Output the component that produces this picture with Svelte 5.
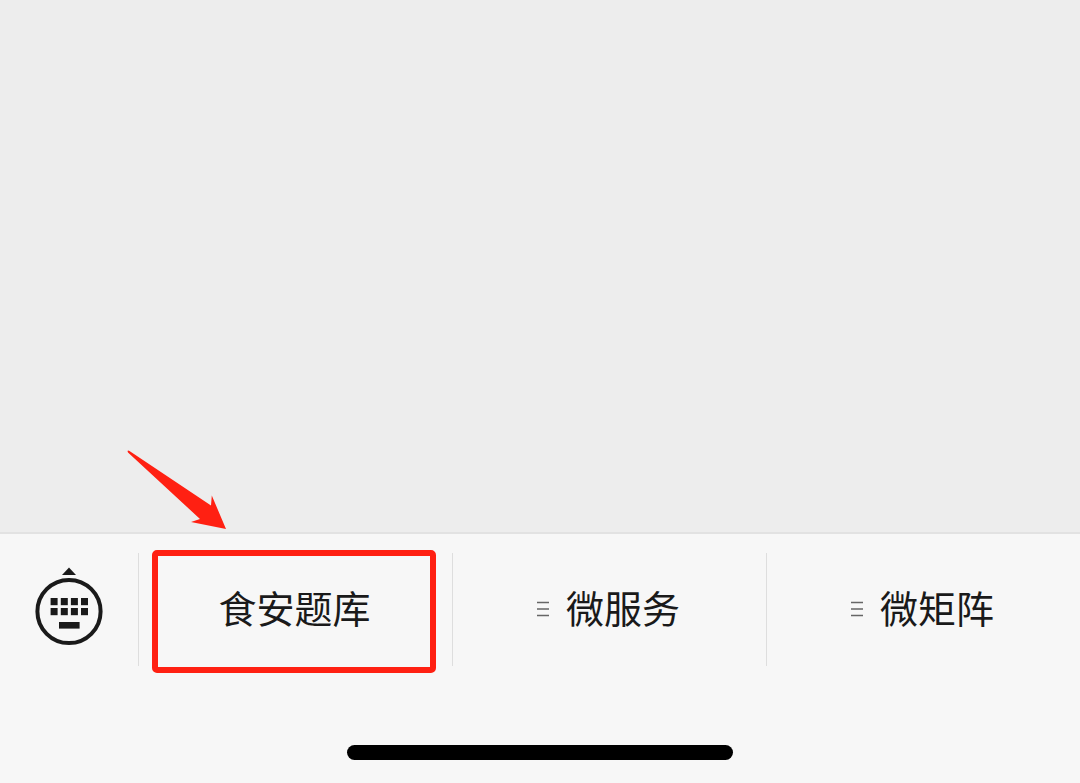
<script>
  const menus = [
    { label: '食安题库', submenu: false, marked: true },
    { label: '微服务', submenu: true, marked: false },
    { label: '微矩阵', submenu: true, marked: false },
  ];
</script>

<div class="screen">
  <main class="chat"></main>

  <footer class="dock">
    <nav class="bar">
      <button class="toggle" type="button" aria-label="键盘">
        <svg width="70" height="80" viewBox="0 0 70 80" aria-hidden="true">
          <path d="M35 1.6 L42 9 H28 Z" fill="#1a1a1a" />
          <circle cx="35" cy="45.5" r="31.6" fill="none" stroke="#1a1a1a" stroke-width="4" />
          <g fill="#1a1a1a">
            {#each [32, 42] as y}
              {#each [16.6, 26.8, 36.9, 47] as x}
                <rect {x} {y} width="7" height="7.2" />
              {/each}
            {/each}
            <rect x="25" y="56" width="20.6" height="6.6" />
          </g>
        </svg>
      </button>

      {#each menus as menu}
        <div class="cell">
          <button class="item" type="button">
            {#if menu.submenu}
              <svg class="lines" width="12" height="16" viewBox="0 0 12 16" aria-hidden="true">
                <path d="M0 1.5H12M0 8H12M0 14.5H12" stroke="#666" stroke-width="1.4" />
              </svg>
            {/if}
            <span>{menu.label}</span>
          </button>
          {#if menu.marked}
            <div class="mark"></div>
            <svg class="arrow" width="101" height="80" viewBox="0 0 101 80" aria-hidden="true">
              <path d="M1.5 1 Q2 0 3.5 1 L85 55.5 L85.8 45.5 L100 79 L65 72 L74 69 L2 2.5 Z" fill="#ff2012" />
            </svg>
          {/if}
        </div>
      {/each}
    </nav>
    <div class="home"></div>
  </footer>
</div>

<style>
  :global(body) {
    margin: 0;
    background: #f7f7f7;
  }

  .screen {
    min-height: 100vh;
    display: flex;
    flex-direction: column;
    font-family: 'Noto Sans CJK SC', sans-serif;
    color: #1a1a1a;
  }

  .chat {
    flex: 1;
    background: #ededed;
  }

  .dock {
    display: flex;
    flex-direction: column;
    align-items: center;
    gap: 79px;
    padding: 19px 0 23px;
    border-top: 2px solid #e2e2e2;
    background: #f7f7f7;
  }

  .bar {
    display: flex;
    align-self: stretch;
  }

  button {
    border: 0;
    padding: 0;
    background: none;
    color: inherit;
    font: inherit;
    cursor: pointer;
  }

  .toggle {
    display: flex;
    align-items: center;
    justify-content: center;
    width: 138px;
  }

  .toggle svg {
    margin-bottom: 8px;
  }

  .cell {
    position: relative;
    flex: 1;
    display: flex;
    border-left: 1px solid #dedede;
  }

  .item {
    flex: 1;
    display: flex;
    align-items: center;
    justify-content: center;
    gap: 17px;
    padding: 26px 2px 31px 0;
    font-size: 38px;
    line-height: 56px;
  }

  .lines {
    margin-top: 4px;
  }

  .mark {
    position: absolute;
    inset: -3px 16px -7px 13px;
    border: 6px solid #ff2012;
    border-radius: 5px;
    pointer-events: none;
  }

  .arrow {
    position: absolute;
    left: -13px;
    top: -103px;
    pointer-events: none;
  }

  .home {
    width: 386px;
    max-width: 80%;
    height: 15px;
    border-radius: 8px;
    background: #000;
  }
</style>
